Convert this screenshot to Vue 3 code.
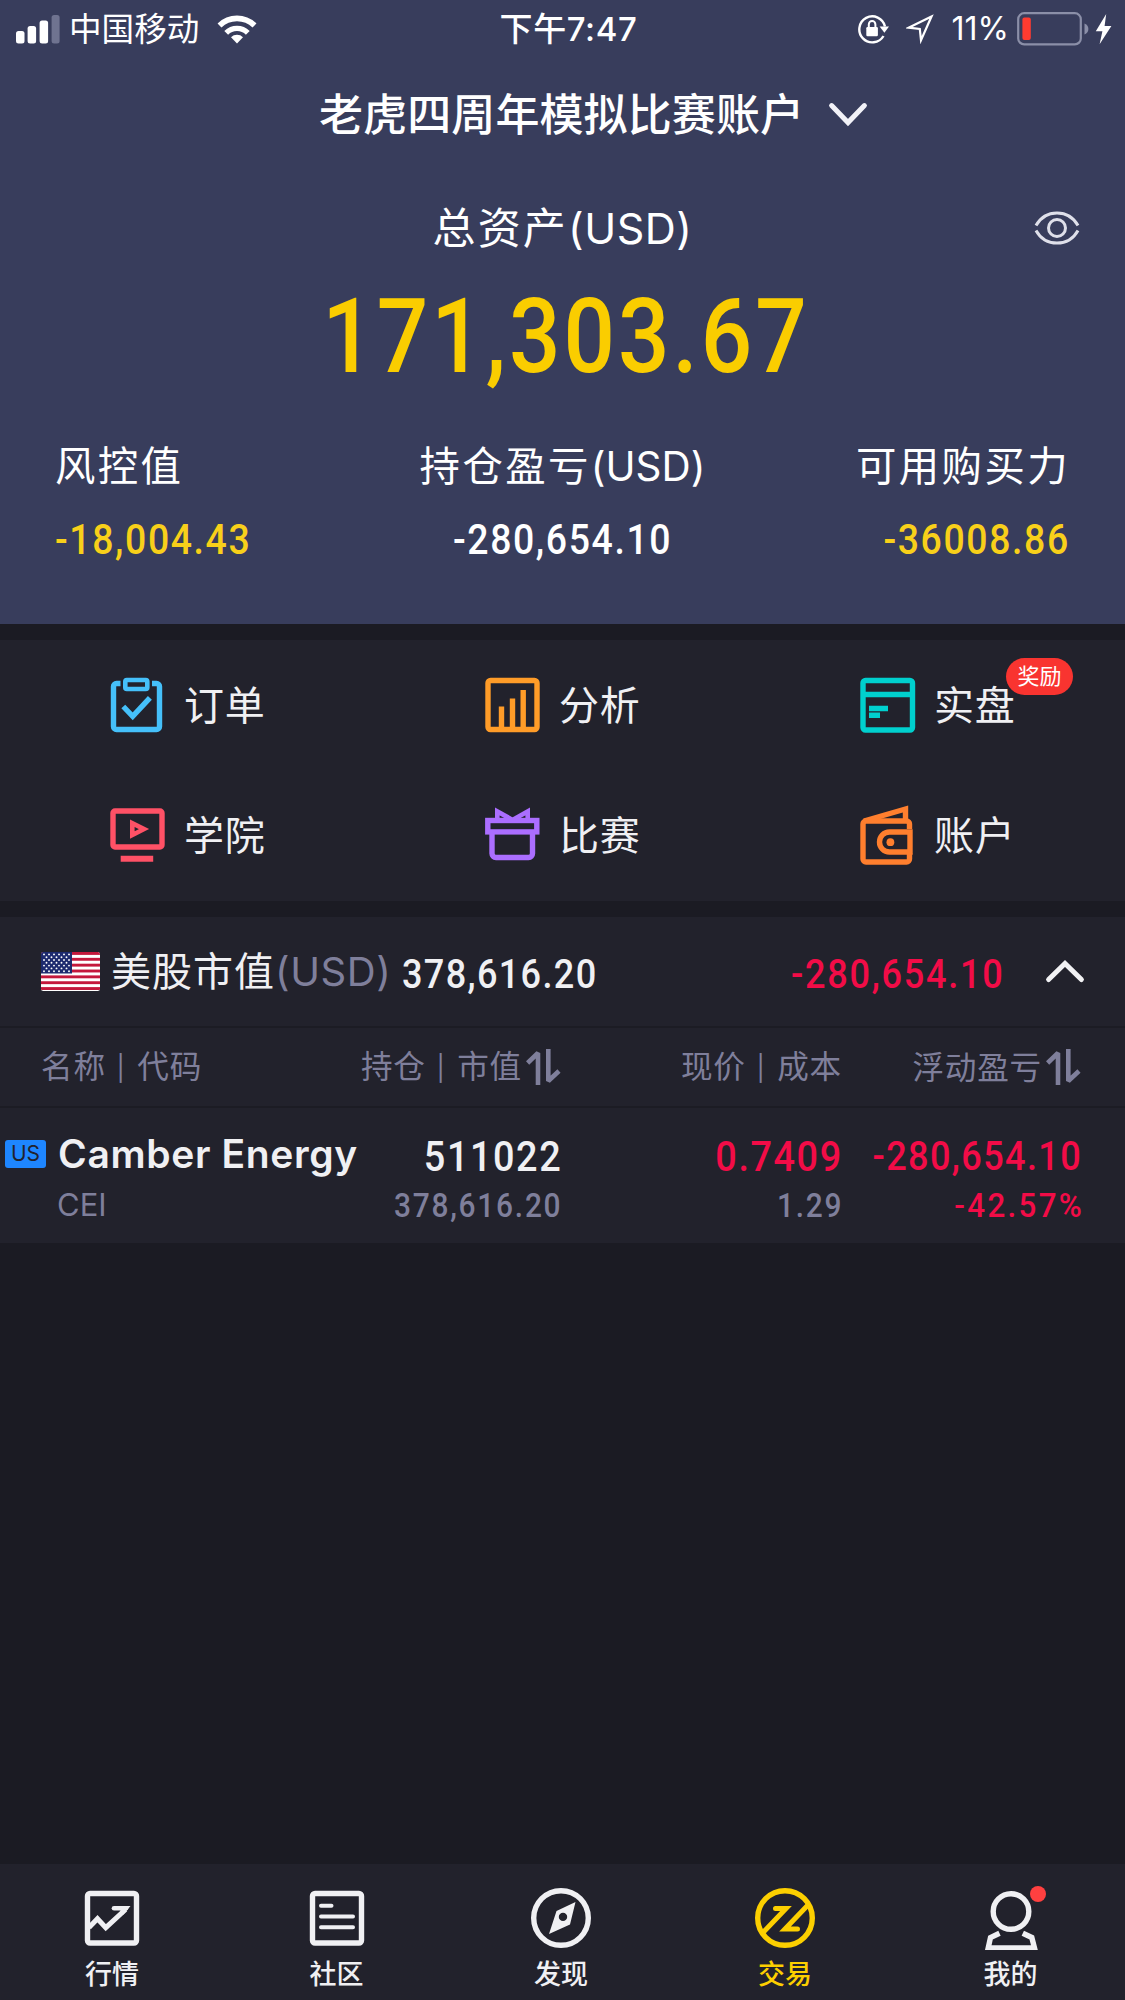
<script setup>
// Trading account screen: assets summary, shortcuts, US positions, tab bar.
import { ref } from 'vue'

const stats = [
  { label: '风控值', value: '-18,004.43', tone: 'gold' },
  { label: '持仓盈亏', unit: '(USD)', value: '-280,654.10', tone: 'white' },
  { label: '可用购买力', value: '-36008.86', tone: 'gold' },
]

const shortcuts = [
  { id: 'orders', label: '订单' },
  { id: 'analysis', label: '分析' },
  { id: 'live', label: '实盘', badge: '奖励' },
  { id: 'academy', label: '学院' },
  { id: 'contest', label: '比赛' },
  { id: 'account', label: '账户' },
]

const positions = [
  {
    name: 'Camber Energy',
    code: 'CEI',
    qty: '511022',
    value: '378,616.20',
    price: '0.7409',
    cost: '1.29',
    pnl: '-280,654.10',
    pct: '-42.57%',
  },
]

const tabs = [
  { id: 'quotes', label: '行情' },
  { id: 'community', label: '社区' },
  { id: 'discover', label: '发现' },
  { id: 'trade', label: '交易' },
  { id: 'me', label: '我的', dot: true },
]
const activeTab = ref('trade')
const expanded = ref(true)

// canton dots, staggered rows
const stars = []
for (let r = 0; r < 7; r++) {
  for (let c = 0; c < 6 - (r % 2); c++) {
    stars.push({ x: 3 + c * 5 + (r % 2) * 2.5, y: 2.4 + r * 2.8 })
  }
}
</script>

<template>
  <div class="screen">
    <header class="summary">
      <div class="status-bar">
        <div class="status-left">
          <svg class="signal" width="44" height="30" viewBox="0 0 44 30">
            <rect x="0" y="17" width="8.5" height="12.5" rx="2.5" fill="#fff" />
            <rect x="11.6" y="12" width="8.5" height="17.5" rx="2.5" fill="#fff" />
            <rect x="23.6" y="6.5" width="8.5" height="23" rx="2.5" fill="#fff" />
            <rect x="35.6" y="1" width="8" height="28.5" rx="2.5" fill="#6f7390" />
          </svg>
          <span class="carrier">中国移动</span>
          <svg class="wifi" width="40" height="30" viewBox="0 0 40 30">
            <path d="M2.5 11.5a25 25 0 0 1 35 0" fill="none" stroke="#fff" stroke-width="5.6" />
            <path d="M9.2 18.8a15.4 15.4 0 0 1 21.6 0" fill="none" stroke="#fff" stroke-width="5.4" />
            <path d="M20 29.5l-6-6.3a8.6 8.6 0 0 1 12 0z" fill="#fff" />
          </svg>
        </div>
        <div class="clock">下午7:47</div>
        <div class="status-right">
          <svg width="31" height="30" viewBox="0 0 31 30">
            <path d="M25.5 22A13 13 0 1 1 27 12.5" fill="none" stroke="#fff" stroke-width="2.4" />
            <path d="M21.6 12.5h9.4l-4.6 6.2z" fill="#fff" />
            <rect x="8.3" y="13" width="11.6" height="9.2" rx="1.2" fill="#fff" />
            <path d="M10.8 13.4v-3a3.3 3.3 0 0 1 6.6 0v3" fill="none" stroke="#fff" stroke-width="2" />
          </svg>
          <svg class="locate" width="28" height="30" viewBox="0 0 28 30">
            <path d="M25.5 2.5L2.6 13.7l11.2 1.2 1.2 11.3z" fill="none" stroke="#fff" stroke-width="2.2" />
          </svg>
          <span class="percent">11%</span>
          <svg class="battery" width="72" height="34" viewBox="0 0 72 34">
            <rect x="1.2" y="1.2" width="62.6" height="31.2" rx="6" fill="none" stroke="#8b8fa8" stroke-width="2.2" />
            <path d="M67.5 11.5c5.2 2.2 5.2 8.8 0 11z" fill="#8b8fa8" />
            <rect x="5.4" y="5.5" width="8.4" height="22.5" rx="2" fill="#ff3b30" />
          </svg>
          <svg class="bolt" width="17" height="32" viewBox="0 0 17 32">
            <path d="M11.2 1L.8 18.2h6.6L4.6 31.2 16.4 13H9.6z" fill="#fff" />
          </svg>
        </div>
      </div>

      <div class="account-title">
        <span>老虎四周年模拟比赛账户</span>
        <svg width="40" height="26" viewBox="0 0 40 26">
          <path d="M3.6 3.6L20 20.6 36.4 3.6" fill="none" stroke="#f2f2f8" stroke-width="5" stroke-linecap="round" />
        </svg>
      </div>

      <div class="total-label">
        <span>总资产<i class="unit">(USD)</i></span>
        <svg class="eye" width="46" height="34" viewBox="0 0 46 34">
          <g fill="none" stroke="#dfe0ea" stroke-width="3">
            <path d="M2 14.6C6.6 6.3 14 2 23 2s16.4 4.3 21 12.6" />
            <path d="M2 19.4C6.6 27.7 14 32 23 32s16.4-4.3 21-12.6" />
            <circle cx="23" cy="17" r="8.5" />
          </g>
        </svg>
      </div>
      <div class="total-value"><span class="num">171,303.67</span></div>

      <div class="stats">
        <div v-for="s in stats" :key="s.label" class="stat">
          <div class="stat-label">{{ s.label }}<i v-if="s.unit" class="unit">{{ s.unit }}</i></div>
          <div class="stat-value" :class="s.tone"><span class="num">{{ s.value }}</span></div>
        </div>
      </div>
    </header>

    <section class="shortcuts">
      <div v-for="s in shortcuts" :key="s.id" class="shortcut">
        <svg width="56" height="66" viewBox="0 0 56 66" fill="none" stroke-width="5.4">
          <g v-if="s.id === 'orders'" stroke="#45c0fa">
            <path d="M10.5 10.5H6.5a3 3 0 0 0-3 3V53.5a3 3 0 0 0 3 3H46.5a3 3 0 0 0 3-3V13.5a3 3 0 0 0-3-3H42" />
            <rect x="15.3" y="7" width="22" height="9" rx="1.5" stroke-width="4.6" />
            <path d="M13.3 33.5l9.4 9.8 17.2-18.5" />
          </g>
          <g v-else-if="s.id === 'analysis'" stroke="#ff9c28">
            <rect x="3" y="7.5" width="49" height="49" rx="2.5" />
            <path d="M16.5 33.5V56M27.5 25.5V56M38.2 17V56" />
          </g>
          <g v-else-if="s.id === 'live'" stroke="#00d0ce">
            <rect x="3" y="7.5" width="49.5" height="49.5" rx="2.5" />
            <path d="M3 21.5h49.5M9 35.5h19M9 42.3h11" />
          </g>
          <g v-else-if="s.id === 'academy'" stroke="#ff5166">
            <rect x="3" y="8" width="49" height="36" rx="2" />
            <path d="M22.3 20.2v11.8l11.7-5.9z" stroke-width="4.6" />
            <path d="M10.7 55.7h32.5" stroke-width="6" />
          </g>
          <g v-else-if="s.id === 'contest'" stroke="#ab6eff">
            <rect x="2.8" y="17.5" width="49" height="11.4" />
            <path d="M7 30v20.5a4 4 0 0 0 4 4H43.5a4 4 0 0 0 4-4V30" />
            <path d="M12.3 17V8.4l15.2 8.5L42.7 8.4V17" stroke-width="4.6" />
          </g>
          <g v-else stroke="#ff7f2e">
            <path d="M49.5 26V21a3 3 0 0 0-3-3H6a3 3 0 0 0-3 3V56a3 3 0 0 0 3 3H46.5a3 3 0 0 0 3-3V50" />
            <path d="M4 18L45.5 6V18" />
            <path d="M50 29H29.5a9.5 9.5 0 0 0 0 20H50z" />
            <circle cx="30.4" cy="39.2" r="3.9" fill="#ff7f2e" stroke="none" />
          </g>
        </svg>
        <span class="shortcut-label">
          {{ s.label }}
          <em v-if="s.badge" class="badge">{{ s.badge }}</em>
        </span>
      </div>
    </section>

    <section class="market">
      <div class="market-head" @click="expanded = !expanded">
        <svg class="flag" width="59" height="39" viewBox="0 0 59 39">
          <clipPath id="flag-clip"><rect width="59" height="39" rx="2.5" /></clipPath>
          <g clip-path="url(#flag-clip)">
            <rect width="59" height="39" fill="#fff" />
            <rect v-for="i in 7" :key="i" x="0" :y="(i - 1) * 5.85" width="59" height="2.9" fill="#c4183c" />
            <rect width="31" height="21.5" fill="#1d2a6e" />
            <circle v-for="(p, i) in stars" :key="'s' + i" :cx="p.x" :cy="p.y" r="0.95" fill="#fff" />
          </g>
        </svg>
        <span class="market-name">美股市值<i class="unit">(USD)</i></span>
        <span class="num market-value">378,616.20</span>
        <span class="num market-pnl">-280,654.10</span>
        <svg class="toggle" width="40" height="26" viewBox="0 0 40 26">
          <path d="M3.6 20.5L20 4.5l16.4 16" fill="none" stroke="#f2f2f4" stroke-width="5" stroke-linecap="round" />
        </svg>
      </div>

      <template v-if="expanded">
        <div class="row columns">
          <div class="col-name">名称 <i class="bar">|</i> 代码</div>
          <div class="col-right">
            <span>持仓 <i class="bar">|</i> 市值</span>
            <svg class="sort" width="35" height="38" viewBox="0 0 35 38" fill="none" stroke="#7f7f9b" stroke-width="4.6">
              <path d="M1.6 15L12 5V37M22.3 1V33L33 23" stroke-linejoin="bevel" />
            </svg>
          </div>
          <div class="col-right"><span>现价 <i class="bar">|</i> 成本</span></div>
          <div class="col-right">
            <span>浮动盈亏</span>
            <svg class="sort" width="35" height="38" viewBox="0 0 35 38" fill="none" stroke="#7f7f9b" stroke-width="4.6">
              <path d="M1.6 15L12 5V37M22.3 1V33L33 23" stroke-linejoin="bevel" />
            </svg>
          </div>
        </div>

        <div v-for="p in positions" :key="p.code" class="row position">
          <div class="stock">
            <div class="stock-name"><span class="region">US</span>{{ p.name }}</div>
            <div class="stock-code">{{ p.code }}</div>
          </div>
          <div class="cell">
            <span class="num main">{{ p.qty }}</span>
            <span class="num sub">{{ p.value }}</span>
          </div>
          <div class="cell">
            <span class="num main loss">{{ p.price }}</span>
            <span class="num sub">{{ p.cost }}</span>
          </div>
          <div class="cell">
            <span class="num main small loss">{{ p.pnl }}</span>
            <span class="num sub pct loss">{{ p.pct }}</span>
          </div>
        </div>
      </template>
    </section>

    <nav class="tab-bar">
      <button
        v-for="t in tabs"
        :key="t.id"
        type="button"
        class="tab"
        :class="{ active: t.id === activeTab }"
        @click="activeTab = t.id"
      >
        <span class="tab-icon">
          <svg width="64" height="64" viewBox="0 0 64 64" fill="none" stroke="currentColor" stroke-width="5.4">
            <template v-if="t.id === 'quotes'">
              <rect x="7.5" y="7.5" width="49" height="49.5" rx="2.5" />
              <path d="M9 41.5l8.5-8.8 8.3 9L45.5 23.5" stroke-width="5" />
              <path d="M34 22.2H46" stroke-linecap="round" stroke-width="4.6" />
              <path d="M50.5 20H38l5 9z" fill="currentColor" stroke="none" />
            </template>
            <template v-else-if="t.id === 'community'">
              <rect x="7.5" y="7.5" width="49" height="49.5" rx="2.5" />
              <path d="M16 19.7h10.5M16 30.5h32M16 41.3h32" stroke-linecap="round" stroke-width="4" />
            </template>
            <template v-else-if="t.id === 'discover'">
              <circle cx="32" cy="32" r="27.3" />
              <path
                d="M46.5 16L27.5 25 20 48 41 38.5zM34 26.7a4.2 4.2 0 1 1 0 8.4a4.2 4.2 0 1 1 0-8.4z"
                fill="currentColor"
                fill-rule="evenodd"
                stroke="none"
              />
            </template>
            <template v-else-if="t.id === 'trade'">
              <circle cx="32" cy="32" r="27.3" />
              <path d="M22.5 22.5H33L10.5 46M54.5 19.5L32 43H44.5" stroke-width="5" stroke-linecap="round" stroke-linejoin="miter" />
            </template>
            <template v-else>
              <circle cx="32" cy="25.5" r="17.8" />
              <path d="M20.5 47.2l-9 4.3L9.2 62H55.5l-2.7-10.5-9-4.3" />
            </template>
          </svg>
          <i v-if="t.dot" class="dot"></i>
        </span>
        <span class="tab-label">{{ t.label }}</span>
      </button>
    </nav>
  </div>
</template>

<style>
body {
  background: #1b1b23;
}
</style>

<style scoped>
.screen {
  width: 1125px;
  height: 2000px;
  display: flex;
  flex-direction: column;
  overflow: hidden;
  background: #1b1b23;
  color: #f0f0f3;
  font-family: Inter, 'Noto Sans CJK SC', sans-serif;
}
svg {
  display: block;
  flex: none;
}
i,
em {
  font-style: normal;
}
/* narrow DIN-like figures */
.num {
  display: inline-block;
  font-family: Roboto, sans-serif;
  font-weight: 500;
  letter-spacing: 0.043em;
  white-space: nowrap;
  transform: scaleX(0.88);
}
.unit {
  letter-spacing: 0;
}

.summary {
  height: 624px;
  background: #383d5c;
  color: #fff;
}
.status-bar {
  height: 57px;
  display: grid;
  grid-template-columns: 1fr auto 1fr;
  align-items: center;
  font-size: 32px;
  line-height: 40px;
}
.status-left,
.status-right {
  display: flex;
  align-items: center;
}
.status-left {
  padding-left: 16px;
}
.carrier {
  margin-left: 9px;
  font-size: 32.6px;
}
.wifi {
  margin-left: 18px;
}
.clock {
  padding-left: 12px;
  font-size: 33px;
  font-weight: 500;
  letter-spacing: 0.6px;
}
.status-right {
  justify-content: flex-end;
  padding-right: 13px;
}
.locate {
  margin-left: 17px;
}
.percent {
  margin-left: 18px;
}
.battery {
  margin-left: 8px;
}
.bolt {
  margin-left: 6px;
}
.account-title {
  height: 115px;
  display: flex;
  align-items: center;
  padding-left: 319px;
  font-size: 44px;
  line-height: 56px;
  font-weight: 500;
}
.account-title svg {
  margin-left: 24px;
}
.account-title span {
  letter-spacing: 0.1px;
}
.total-label {
  height: 112px;
  display: flex;
  align-items: center;
  justify-content: center;
  position: relative;
  font-size: 43px;
  line-height: 56px;
  letter-spacing: 2.2px;
}
.total-label .unit {
  letter-spacing: 0.5px;
}
.eye {
  position: absolute;
  right: 45px;
  top: 39px;
}
.total-value {
  height: 102px;
  padding-left: 7px;
  text-align: center;
  font-size: 103px;
  line-height: 102px;
  color: #facd00;
}
.total-value .num {
  letter-spacing: 0.033em;
}
.stats {
  margin-top: 54px;
  padding: 0 55px;
  display: grid;
  grid-template-columns: 1fr auto 1fr;
}
.stat {
  text-align: center;
}
.stat:first-child {
  text-align: left;
}
.stat:last-child {
  text-align: right;
}
.stat-label {
  height: 54px;
  line-height: 54px;
  font-size: 40.4px;
  letter-spacing: 2.4px;
}
.stat-value {
  margin-top: 17px;
  height: 56px;
  line-height: 56px;
  font-size: 42.5px;
}
.stat:first-child .num {
  transform-origin: left;
}
.stat:last-child .num {
  transform-origin: right;
}
.gold {
  color: #f8d01a;
}
.white {
  color: #fff;
}

.shortcuts {
  margin-top: 16px;
  height: 261px;
  padding-top: 1px;
  box-sizing: border-box;
  display: grid;
  grid-template-columns: repeat(3, 1fr);
  grid-template-rows: 130px 130px;
  background: #22222c;
}
.shortcut {
  display: flex;
  align-items: center;
  padding-left: 110px;
}
.shortcut-label {
  position: relative;
  margin-left: 18px;
  font-size: 40px;
  line-height: 56px;
  letter-spacing: 0.8px;
}
.badge {
  position: absolute;
  left: 72px;
  top: -20px;
  width: 67px;
  height: 37px;
  border-radius: 19px;
  background: #f93430;
  color: #fff;
  font-size: 22px;
  line-height: 36px;
  letter-spacing: 0;
  text-align: center;
}

.market {
  margin-top: 16px;
  background: #22222c;
}
.market-head {
  height: 109px;
  display: flex;
  align-items: center;
  padding: 0 40px 0 41px;
}
.market-name {
  margin-left: 11px;
  font-size: 40px;
  line-height: 54px;
  letter-spacing: 1px;
  white-space: nowrap;
}
.market-name .unit {
  color: #7f7f9b;
  letter-spacing: 0.6px;
}
.market-value {
  margin-left: 11px;
  padding-top: 4px;
  font-size: 41px;
  letter-spacing: 0.037em;
  transform-origin: left;
}
.market-pnl {
  margin-left: auto;
  margin-right: -3px;
  padding-top: 4px;
  font-size: 41px;
  letter-spacing: 0.048em;
  color: #f20c47;
  transform-origin: right;
}
.toggle {
  margin-left: 43px;
}
.row {
  display: grid;
  grid-template-columns: 360px 201px 281px 239px;
  border-top: 2px solid #1c1c24;
}
.columns {
  height: 78px;
  align-items: center;
  font-size: 31.6px;
  line-height: 44px;
  letter-spacing: 0.8px;
  color: #7f7f9b;
}
.bar {
  font-size: 25px;
  position: relative;
  top: -1px;
  padding: 0 2px 0 1px;
}
.col-name {
  padding: 2px 0 0 41px;
}
.col-right {
  display: flex;
  justify-content: flex-end;
  align-items: center;
  white-space: nowrap;
}
.col-right span {
  padding-top: 2px;
}
.sort {
  margin-left: 4px;
}
.position {
  height: 135px;
}
.stock-name {
  display: flex;
  align-items: center;
  padding: 17px 0 0 5px;
  height: 57px;
  font-size: 39px;
  line-height: 48px;
  font-weight: 600;
  letter-spacing: 0.65px;
  white-space: nowrap;
}
.region {
  width: 41px;
  height: 28px;
  margin-right: 12px;
  border-radius: 3px;
  background: #1e86ff;
  color: #22222c;
  font-size: 21px;
  font-weight: 400;
  line-height: 28px;
  letter-spacing: 0;
  text-align: center;
}
.stock-code {
  padding: 3px 0 0 57px;
  font-size: 31px;
  line-height: 40px;
  color: #7f7f9b;
}
.cell {
  display: flex;
  flex-direction: column;
  align-items: flex-end;
}
.cell .num {
  margin-right: -1px;
  transform-origin: right;
}
.main {
  padding-top: 19px;
  height: 57px;
  font-size: 43px;
  line-height: 58px;
  letter-spacing: 0.041em;
}
.main.small {
  font-size: 41px;
  letter-spacing: 0.038em;
}
.sub {
  padding-top: 1px;
  font-size: 34px;
  line-height: 40px;
  letter-spacing: 0.058em;
  color: #7f7f9b;
}
.sub.pct {
  letter-spacing: 0.075em;
  margin-right: -3px;
  transform: scaleX(0.92);
}
/* after .sub, whose grey it replaces */
.loss {
  color: #f20c47;
}

.tab-bar {
  margin-top: auto;
  height: 136px;
  display: grid;
  grid-template-columns: 224px 225px 224px 224px 227px;
  background: #22222c;
}
.tab {
  display: flex;
  flex-direction: column;
  align-items: center;
  padding: 22px 0 0;
  border: none;
  background: none;
  color: #f0f0f3;
  font-family: inherit;
}
.tab.active {
  color: #fccf00;
}
.tab-icon {
  position: relative;
}
.dot {
  position: absolute;
  left: 51px;
  top: 0;
  width: 16px;
  height: 16px;
  border-radius: 50%;
  background: #ff4040;
}
.tab-label {
  margin-top: 7px;
  font-size: 27px;
  line-height: 36px;
  font-weight: 500;
}
</style>
